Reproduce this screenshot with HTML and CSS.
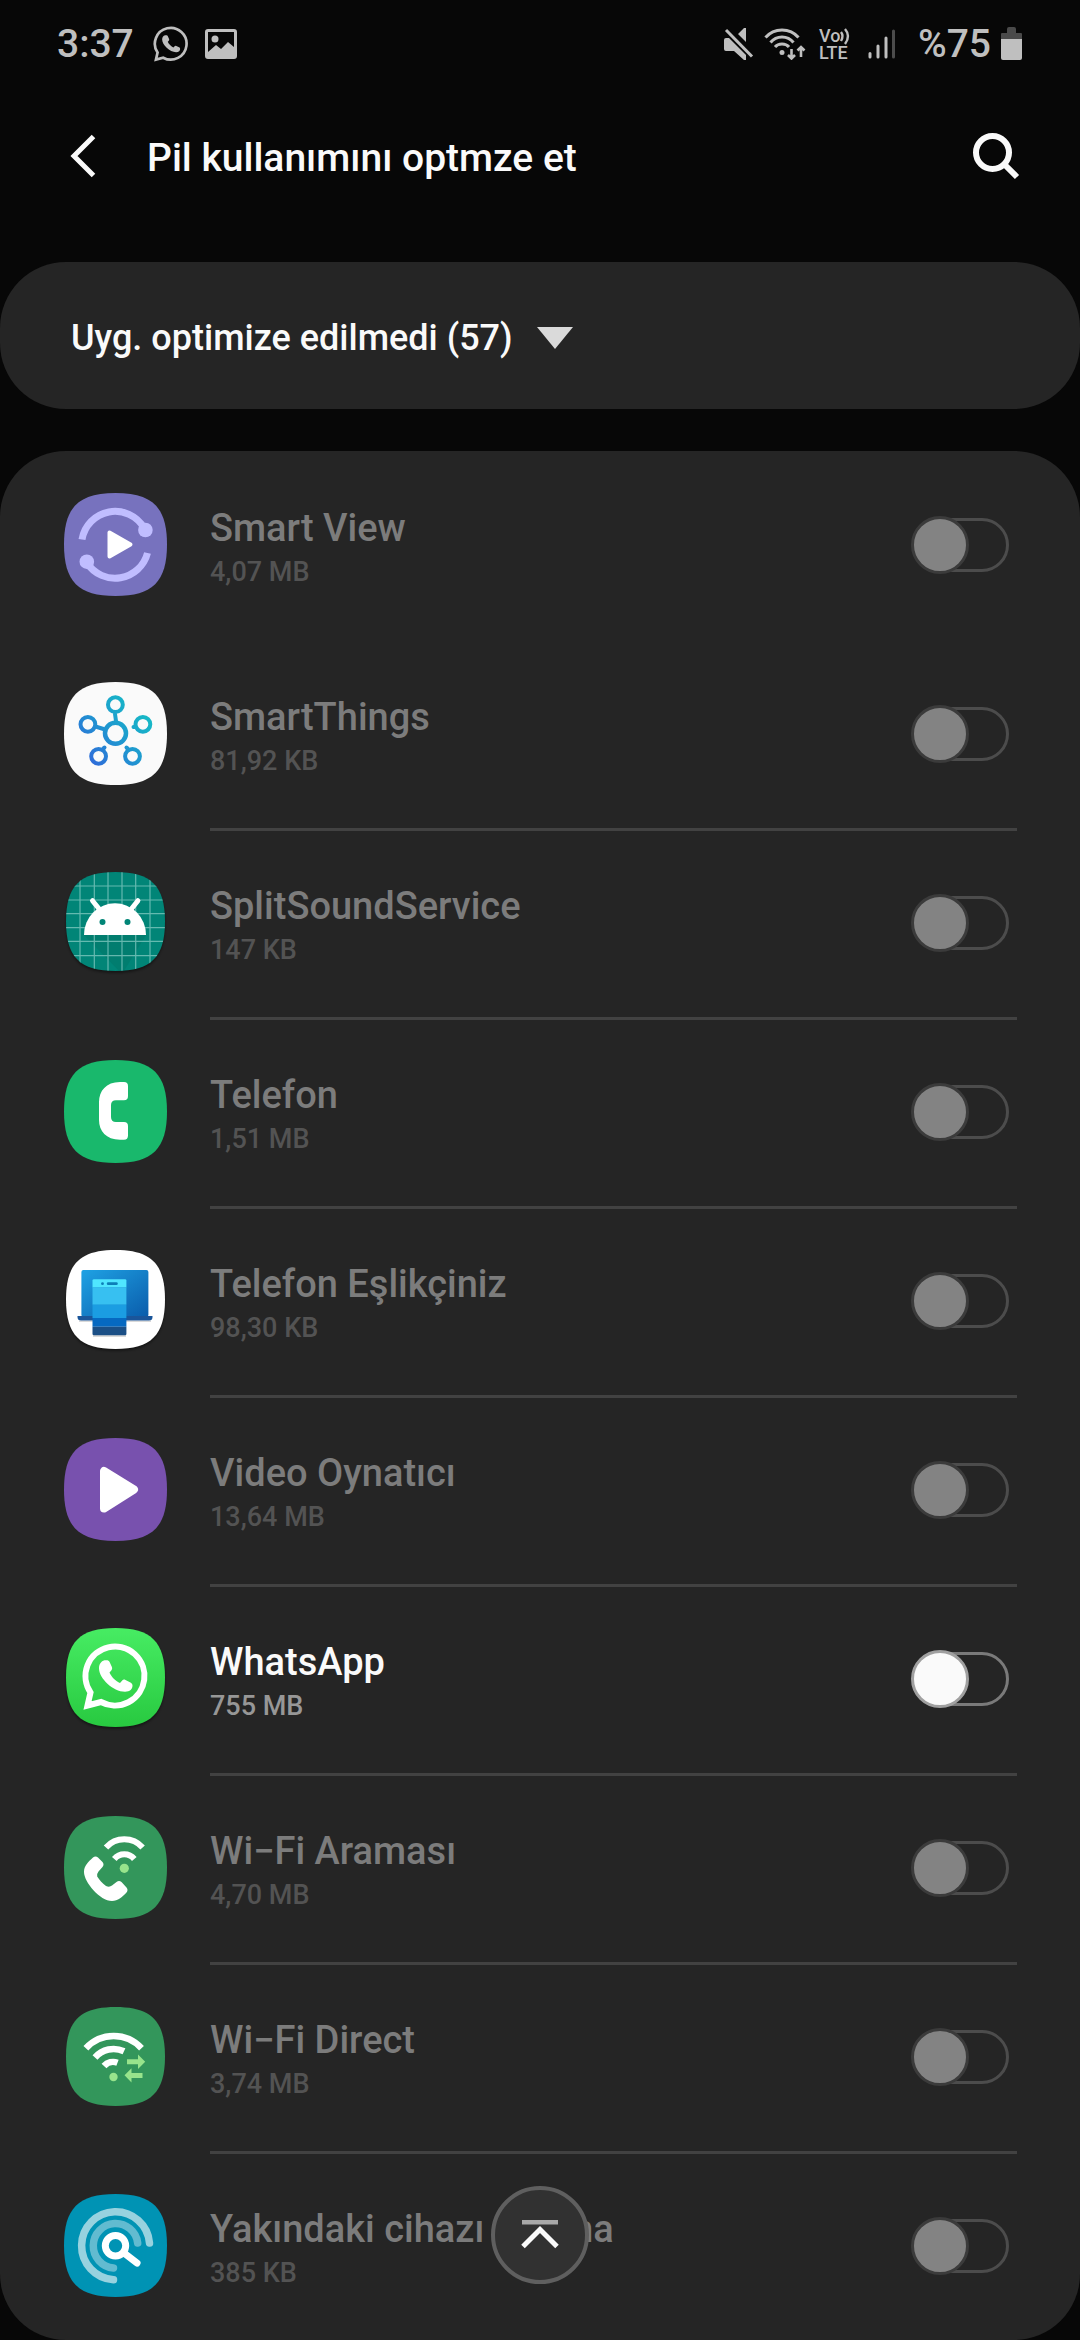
FILE: index.html
```html
<!DOCTYPE html>
<html lang="tr">
<head>
<meta charset="utf-8">
<meta name="viewport" content="width=device-width, initial-scale=1">
<title>Pil kullanımı</title>
<link rel="stylesheet" href="styles.css">
</head>
<body>
<svg class="defs" width="0" height="0" aria-hidden="true">
  <defs>
    <symbol id="tile" viewBox="0 0 100 100"><path d="M50 0C86 0 100 14 100 50S86 100 50 100 0 86 0 50 14 0 50 0Z"/></symbol>
    <clipPath id="tile-clip"><path transform="translate(2 1) scale(.99)" d="M50 0C86 0 100 14 100 50S86 100 50 100 0 86 0 50 14 0 50 0Z"/></clipPath>
    <path id="handset" d="M40.500 33.300c-3.500 1-5.500 4-5.500 8 0 10 14 23.500 26 23.500 5 0 7.500-3 7.500-6 0-1.500-.5-2.500-2-3.300l-5-2.500c-1.500-.7-2.500-.4-3.300.6l-2.200 2.300c-4-1.500-9-6.500-10.500-10.500l1.800-2c1-1 1-2 .6-3.300l-2.300-5c-.7-1.600-1.800-2.200-5.100-1.800z"/>
    <path id="bubble" d="M26.500 65.500A29.500 29.500 0 1 1 37 75L23.500 78.500Z"/>
    <linearGradient id="things" x1="20" y1="85" x2="85" y2="25" gradientUnits="userSpaceOnUse"><stop offset="0" stop-color="#3263db"/><stop offset=".5" stop-color="#1f97d0"/><stop offset="1" stop-color="#15bfc4"/></linearGradient>
    <linearGradient id="laptop" x1="0" y1="0" x2="1" y2="1"><stop offset="0" stop-color="#1fa2e4"/><stop offset="1" stop-color="#0a5cab"/></linearGradient>
    <linearGradient id="green" x1="0" y1="0" x2="0" y2="1"><stop offset="0" stop-color="#47ec63"/><stop offset="1" stop-color="#28c940"/></linearGradient>
  </defs>
</svg>

<header>
  <div class="status">
    <div class="status-side">
      <span class="clock">3:37</span>
      <svg class="s-chat" width="36" height="36" viewBox="18 16 67 67"><use href="#bubble" fill="none" stroke="#bfbfbf" stroke-width="5"/><use href="#handset" fill="#bfbfbf"/></svg>
      <svg width="32" height="30" viewBox="0 0 32 30"><path fill="#bfbfbf" fill-rule="evenodd" d="M3 0H29Q32 0 32 3V27Q32 30 29 30H3Q0 30 0 27V3Q0 0 3 0ZM3 3V23L11 16 16 20 23 13 29 18V3Z"/><circle cx="10" cy="10" r="3.500" fill="#bfbfbf"/></svg>
    </div>
    <div class="status-side">
      <svg class="s-mute" width="30" height="32" viewBox="0 0 30 32"><path fill="#bfbfbf" d="M2 10H5L22 27V32H20L10 23H2Q0 23 0 21V12Q0 10 2 10ZM22 0V14L14 6 20 0Z"/><path d="M2 2 28 28.500" stroke="#bfbfbf" stroke-width="3"/></svg>
      <svg class="s-wifi" width="42" height="32" viewBox="0 0 42 32"><g fill="none" stroke="#bfbfbf" stroke-width="3"><path d="M1.500 9.500Q8 2 18 2T34.500 9.500"/><path d="M6.500 14.500Q11 9 18 9T29.500 14.500"/><path d="M11 19Q13.500 16 18 16T25 19"/><path d="M27.500 21V30M24 27l3.500 3.500L31 27M37 29V19M33.500 22.500 37 19l3.500 3.500" stroke-width="2.600"/></g><circle cx="18" cy="24.500" r="2.500" fill="#bfbfbf"/></svg>
      <svg class="s-lte" width="36" height="40" viewBox="0 -3 36 40"><g fill="#bfbfbf" class="lte"><text x="1" y="15">Vo</text><text x="1" y="32">LTE</text></g><path d="M23 5Q26 9 23 14M27 2Q33 9 27 17" fill="none" stroke="#bfbfbf" stroke-width="2.400"/></svg>
      <svg class="s-signal" width="28" height="30" viewBox="0 0 28 30"><g stroke-width="3" stroke-linecap="round" stroke="#bfbfbf"><path d="M2 24.500V28M10 17V28M18 9V28"/><path d="M25.500 2V28" stroke="#4c4c4c"/></g></svg>
      <span class="percent">%75</span>
      <svg width="21" height="33" viewBox="0 0 21 33"><path d="M6 6V2Q6 0 8 0H13Q15 0 15 2V6H20Q21 6 21 7V12H0V7Q0 6 1 6Z" fill="#4a4a4a"/><path d="M0 12H21V31Q21 33 19 33H2Q0 33 0 31Z" fill="#bfbfbf"/></svg>
    </div>
  </div>
  <div class="appbar">
    <button class="icon-button" type="button" aria-label="Geri"><svg width="26" height="44" viewBox="0 0 26 44"><path d="M23.500 2.500 4 22 23.500 41.500" fill="none" stroke="#fafafa" stroke-width="5"/></svg></button>
    <h1>Pil kullanımını optmze et</h1>
    <button class="icon-button" type="button" aria-label="Ara"><svg width="48" height="48" viewBox="0 0 48 48"><circle cx="20.500" cy="20.500" r="16.500" fill="none" stroke="#fafafa" stroke-width="6"/><path d="M32 32 45 45" stroke="#fafafa" stroke-width="6"/></svg></button>
  </div>
</header>

<main>
  <div class="filter">
    <select aria-label="Filtre"><option>Uyg. optimize edilmedi (57)</option></select>
    <svg width="36" height="22" viewBox="0 0 36 22"><path d="M0 0H36L18 22Z" fill="#dadada"/></svg>
  </div>

  <ul class="list">
    <li><label class="row">
      <svg class="app" viewBox="0 0 103 103"><use href="#tile" fill="#7772be"/><g fill="none" stroke="#c0bdff" stroke-width="7"><path d="M18 46.500A33.500 33.500 0 0 1 80 35"/><path d="M83.500 60A33.500 33.500 0 0 1 23 70"/></g><g fill="#c0bdff"><circle cx="81.400" cy="37" r="7.300"/><circle cx="22.800" cy="68.700" r="7.300"/></g><path d="M45.500 39.500V63.500L66.500 51.500Z" fill="#fff" stroke="#fff" stroke-width="4" stroke-linejoin="round"/></svg>
      <span class="body"><span class="text"><span class="name">Smart View</span><span class="size">4,07 MB</span></span><input type="checkbox" role="switch" disabled></span>
    </label></li>
    <li><label class="row">
      <svg class="app" viewBox="0 0 103 103"><use href="#tile" fill="#fafafa"/><g fill="none" stroke="url(#things)" stroke-width="4" stroke-linecap="round"><circle cx="51.500" cy="51.300" r="10.500" stroke-width="4.500"/><circle cx="51.400" cy="22.700" r="7.400"/><circle cx="23.900" cy="42.300" r="7.400"/><circle cx="78.900" cy="42.300" r="7.400"/><circle cx="34.600" cy="74.300" r="7.400"/><circle cx="68.500" cy="74.300" r="7.400"/><path d="M51 32 52 39M33 45 39.500 47M70.500 45H69.500M39.500 66.500 40.500 65.500M63.500 66.500 62.500 65.500"/></g></svg>
      <span class="body"><span class="text"><span class="name">SmartThings</span><span class="size">81,92 KB</span></span><input type="checkbox" role="switch" disabled></span>
    </label></li>
    <li><label class="row">
      <svg class="app shaded" viewBox="0 0 103 103"><g clip-path="url(#tile-clip)"><path d="M0 0H103V103H0Z" fill="#018577"/><path d="M20 64H82L58 103Z" fill="#017567" opacity=".5"/><path d="M16 0V103M30.300 0V103M44 0V103M58 0V103M71.700 0V103M86 0V103M0 15H103M0 29H103M0 42.700H103M0 56.700H103M0 70.300H103M0 84.700H103" stroke="#8fd0c8" stroke-width="1.200" opacity=".7"/></g><path d="M20 64A31 31.700 0 0 1 82 64Z" fill="#fff"/><path d="M28.500 29.700 36 39M73.900 29.700 66.500 39" stroke="#fff" stroke-width="5" stroke-linecap="round"/><g fill="#018577"><circle cx="38.500" cy="51" r="3"/><circle cx="63.500" cy="51" r="3"/></g></svg>
      <span class="body"><span class="text"><span class="name">SplitSoundService</span><span class="size">147 KB</span></span><input type="checkbox" role="switch" disabled></span>
    </label></li>
    <li><label class="row">
      <svg class="app" viewBox="0 0 103 103"><use href="#tile" fill="#19b86c"/><path d="M60 22H56C42 22 35 31 35 42V60C35 71 42 79.700 56 79.700H60Q64 79.700 64 75.500V66Q64 62 60 62H52Q47 62 47 57V45Q47 40.300 52 40.300H60Q64 40.300 64 36V26Q64 22 60 22Z" fill="#fff"/></svg>
      <span class="body"><span class="text"><span class="name">Telefon</span><span class="size">1,51 MB</span></span><input type="checkbox" role="switch" disabled></span>
    </label></li>
    <li><label class="row">
      <svg class="app shaded" viewBox="0 0 103 103"><use href="#tile" x="2" y="1" width="99" height="99" fill="#fff"/><path d="M15 71.500H87V73H15ZM29 86H62V88H29Z" fill="#000" opacity=".15"/><rect x="17.400" y="21" width="67" height="47" rx="2" fill="url(#laptop)"/><path d="M13.500 67H88.500V68Q88.500 71.500 85 71.500H17Q13.500 71.500 13.500 68Z" fill="#1a559a"/><path d="M28.500 38.500V31.500Q28.500 30.300 30 30.300H61Q62.400 30.300 62.400 31.500V38.500Z" fill="#50e6ff"/><path d="M28.500 38.500H62.400V55.700H28.500Z" fill="#37c0f1"/><path d="M28.500 55.700H62.400V69H28.500Z" fill="#1b9de2"/><path d="M28.500 69H62.400V77.700H28.500Z" fill="#0669c1"/><path d="M28.500 77.700H62.400V85Q62.400 86.300 61 86.300H30Q28.500 86.300 28.500 85Z" fill="#1b4f86"/><circle cx="38.500" cy="34.700" r="1.400" fill="#0d7fb8"/><rect x="42.800" y="33.300" width="11" height="2.800" rx="1.400" fill="#0d7fb8"/></svg>
      <span class="body"><span class="text"><span class="name">Telefon Eşlikçiniz</span><span class="size">98,30 KB</span></span><input type="checkbox" role="switch" disabled></span>
    </label></li>
    <li><label class="row">
      <svg class="app" viewBox="0 0 103 103"><use href="#tile" fill="#7851ae"/><path d="M40 33V70.500L70 51.500Z" fill="#fff" stroke="#fff" stroke-width="8" stroke-linejoin="round"/></svg>
      <span class="body"><span class="text"><span class="name">Video Oynatıcı</span><span class="size">13,64 MB</span></span><input type="checkbox" role="switch" disabled></span>
    </label></li>
    <li><label class="row active">
      <svg class="app shaded" viewBox="0 0 103 103"><use href="#tile" x="2" y="1" width="99" height="99" fill="url(#green)"/><use href="#bubble" fill="none" stroke="#fff" stroke-width="6"/><use href="#handset" fill="#fff"/></svg>
      <span class="body"><span class="text"><span class="name">WhatsApp</span><span class="size">755 MB</span></span><input type="checkbox" role="switch"></span>
    </label></li>
    <li><label class="row">
      <svg class="app" viewBox="0 0 103 103"><use href="#tile" fill="#33965b"/><path d="M29 41.500C24 46 20 50 20 56C20 66 36 85 48 85C54 85 58 81 62.500 76.500Q64.500 74 62.500 71.500L57.500 66Q55 64 52.500 66L48 69.500Q45.500 71.500 42 70C38 67 35.500 64 33.200 60.500Q32.500 58 34.500 55.500L38.500 51Q40.500 48.500 38.500 46L34 41.500Q31.500 39.500 29 41.500Z" fill="#fff"/><g fill="none" stroke="#fff" stroke-width="6"><path d="M42 31.500A24.500 24.500 0 0 1 78.600 31.500"/><path d="M50.300 43A13 13 0 0 1 70.300 43"/></g><circle cx="60.300" cy="52.300" r="4.600" fill="#98e48c"/></svg>
      <span class="body"><span class="text"><span class="name">Wi−Fi Araması</span><span class="size">4,70 MB</span></span><input type="checkbox" role="switch" disabled></span>
    </label></li>
    <li><label class="row">
      <svg class="app" viewBox="0 0 103 103"><use href="#tile" x="2" y="2" width="99" height="99" fill="#33965b"/><g fill="none" stroke="#fff" stroke-width="6.500"><path d="M21.900 43.300A37.600 37.600 0 0 1 77.500 43.300"/><path d="M31 52.500A24.600 24.600 0 0 1 60 46.300"/><path d="M40 61A12.300 12.300 0 0 1 53.500 57.700"/></g><g fill="#98e48c"><circle cx="49.500" cy="72" r="4.200"/><path d="M63 54.200H74V49.500L81.200 56.700 74 64V59.200H63ZM78.500 68H67.500V63.300L60.500 70.300 67.500 77.500V73H78.500Z"/></g></svg>
      <span class="body"><span class="text"><span class="name">Wi−Fi Direct</span><span class="size">3,74 MB</span></span><input type="checkbox" role="switch" disabled></span>
    </label></li>
    <li><label class="row">
      <svg class="app" viewBox="0 0 103 103"><use href="#tile" fill="#0093b4"/><g fill="none" stroke-width="7.500" stroke-linecap="round"><path d="M85.500 49A34 34 0 1 0 49.500 85.700" stroke="#97d2df"/><path d="M73.700 49A22.300 22.300 0 1 0 49.500 74" stroke="#62bbd0"/><circle cx="51.500" cy="51.700" r="10.200" stroke="#fff" stroke-width="7"/><path d="M60 59 73 69" stroke="#fff" stroke-width="7"/></g></svg>
      <span class="body"><span class="text"><span class="name">Yakındaki cihazı tarama</span><span class="size">385 KB</span></span><input type="checkbox" role="switch" disabled></span>
    </label></li>
  </ul>
</main>

<button class="to-top" type="button" aria-label="Başa dön"><svg width="40" height="30" viewBox="0 0 40 30"><path d="M2 0H38V4.500H2Z" fill="#a8a8a8"/><path d="M3 26.500 20 9.500 37 26.500" fill="none" stroke="#fafafa" stroke-width="5"/></svg></button>
</body>
</html>
```
FILE: styles.css
```css
*,
*::before,
*::after {
  box-sizing: border-box;
}

body {
  margin: 0;
  background: #070707;
  color: #fafafa;
  font-family: Roboto, "Noto Sans", sans-serif;
  font-weight: 500;
}

svg {
  display: block;
  flex: none;
}

.defs {
  position: absolute;
}

button {
  padding: 0;
  border: 0;
  background: none;
  color: inherit;
  cursor: pointer;
}

/* Status bar */
.status {
  display: flex;
  justify-content: space-between;
  height: 87px;
  padding: 0 58px 0 57px;
  color: #bfbfbf;
  font-size: 39px;
}

.status-side {
  display: flex;
  align-items: center;
}

.s-chat {
  margin: 0 16px 0 19px;
}

.s-mute {
  margin-right: 10px;
}

.s-wifi {
  margin-right: 12px;
}

.s-lte {
  margin-right: 14px;
}

.s-signal {
  margin-right: 22px;
}

.percent {
  margin-right: 10px;
}

.lte {
  font-size: 18px;
}

/* Title bar */
.appbar {
  display: flex;
  align-items: center;
  height: 138px;
  padding: 0 60px 0 70px;
}

.appbar h1 {
  flex: 1;
  margin: 0;
  padding: 3px 0 0 51px;
  font-size: 39px;
  font-weight: 500;
}

/* Filter card */
.filter {
  display: flex;
  align-items: center;
  height: 147px;
  margin: 37px 0 42px;
  padding: 5px 71px 0;
  border-radius: 66px;
  background: #252525;
}

.filter select {
  appearance: none;
  margin: 0 24px 0 0;
  padding: 0;
  border: 0;
  background: none;
  color: inherit;
  font: inherit;
  font-size: 36px;
  line-height: 48px;
}

/* App list */
.list {
  margin: 0;
  padding: 2px 0 0;
  border-radius: 66px;
  background: #252525;
  list-style: none;
}

.row {
  display: flex;
  align-items: center;
  gap: 43px;
  padding: 0 63px 0 64px;
}

.app {
  width: 103px;
  height: 103px;
  margin-bottom: 6px;
}

.shaded {
  filter: drop-shadow(0 2px 1px rgba(0, 0, 0, 0.4));
}

.body {
  display: flex;
  flex: 1;
  align-items: center;
  justify-content: space-between;
  height: 189px;
  padding: 0 8px 3px 0;
  border-bottom: 3px solid #424242;
}

li:first-child .body {
  border-color: transparent;
}

li:last-child .body {
  height: 186px;
  border-bottom: 0;
}

li:last-child .app {
  margin-bottom: 3px;
}

.text {
  display: flex;
  flex-direction: column;
  gap: 2px;
  padding-top: 5px;
}

.name {
  color: #7c7c7c;
  font-size: 38px;
  line-height: 48px;
}

.size {
  color: #535353;
  font-size: 27px;
  line-height: 36px;
}

.active .name {
  color: #fafafa;
}

.active .size {
  color: #979797;
}

/* Switch */
input[role="switch"] {
  appearance: none;
  display: grid;
  flex: none;
  align-items: center;
  width: 98px;
  height: 58px;
  margin: 0;
}

input[role="switch"]::before,
input[role="switch"]::after {
  content: "";
  grid-area: 1 / 1;
  border: 3px solid #7a7a7a;
  border-radius: 29px;
}

input[role="switch"]::before {
  height: 54px;
  margin-left: 2px;
}

input[role="switch"]::after {
  width: 58px;
  height: 58px;
  border-color: #a0a0a0;
  background: #fafafa;
}

input[role="switch"]:checked::after {
  justify-self: end;
}

input[role="switch"]:disabled::before {
  border-color: #4c4c4c;
}

input[role="switch"]:disabled::after {
  border-color: #3b3b3b;
  background: #838383;
}

/* Scroll-to-top button */
.to-top {
  position: fixed;
  right: 0;
  bottom: 56px;
  left: 0;
  display: grid;
  place-items: center;
  width: 98px;
  height: 98px;
  margin: 0 auto;
  border: 4px solid #5f5f5f;
  border-radius: 50%;
  background: #313131;
}
```
